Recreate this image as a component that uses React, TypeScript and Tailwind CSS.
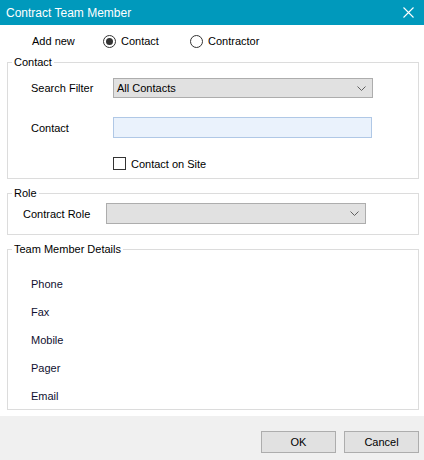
import React from "react";

const Chevron = () => (
  <svg width="9" height="5" viewBox="0 0 9 5" className="shrink-0">
    <path d="M0.5 0.5 L4.5 4.5 L8.5 0.5" fill="none" stroke="#606060" strokeWidth="1" />
  </svg>
);

const Radio = ({ checked, label }: { checked?: boolean; label: string }) => (
  <label className="flex items-center">
    <span className="w-[13px] h-[13px] rounded-full border border-[#333333] bg-white flex items-center justify-center">
      {checked && <span className="w-[7px] h-[7px] rounded-full bg-[#333333]" />}
    </span>
    <span className="ml-[5px]">{label}</span>
  </label>
);

const Select = ({ value, width, height }: { value?: string; width: string; height: string }) => (
  <div
    className={`${width} ${height} bg-[#e1e1e1] border border-[#adadad] flex items-center justify-between pl-[3px] pr-[6px]`}
  >
    <span>{value}</span>
    <Chevron />
  </div>
);

export default function App() {
  return (
    <div
      className="w-[424px] h-[460px] bg-white flex flex-col text-[11px] leading-[14px] text-black overflow-hidden"
      style={{ fontFamily: '"Liberation Sans", Arial, sans-serif' }}
    >
      {/* Title bar */}
      <div className="h-[25px] bg-[#0099bc] flex items-center justify-between pl-[6px] pr-[10px] text-white shrink-0">
        <span className="text-[12px]">Contract Team Member</span>
        <svg width="11" height="11" viewBox="0 0 11 11">
          <path d="M0.5 0.5 L10.5 10.5 M10.5 0.5 L0.5 10.5" stroke="white" strokeWidth="1.1" />
        </svg>
      </div>

      <div className="flex flex-col pl-[7px] pr-[5px]">
        {/* Add new choice */}
        <div className="h-[20px] mt-[6px] flex items-center pl-[25px]">
          <span className="w-[71px]">Add new</span>
          <div className="w-[87px]">
            <Radio checked label="Contact" />
          </div>
          <Radio label="Contractor" />
        </div>

        {/* Contact group */}
        <fieldset className="mt-[4px] border border-[#dcdcdc] pb-[8px]">
          <legend className="ml-[4px] px-[2px] leading-[14px]">Contact</legend>
          <div className="mt-[9px] flex items-center pl-[23px]">
            <span className="w-[82px]">Search Filter</span>
            <Select value="All Contacts" width="w-[260px]" height="h-[20px]" />
          </div>
          <div className="mt-[19px] flex items-center pl-[23px]">
            <span className="w-[82px]">Contact</span>
            <div className="w-[259px] h-[21px] bg-[#eaf2fc] border border-[#b0c8e6]" />
          </div>
          <div className="mt-[19px] h-[13px] flex items-center pl-[105px]">
            <span className="w-[13px] h-[13px] border border-[#333333] bg-white" />
            <span className="ml-[5px]">Contact on Site</span>
          </div>
        </fieldset>

        {/* Role group */}
        <fieldset className="mt-[7px] border border-[#dcdcdc] pb-[10px]">
          <legend className="ml-[4px] px-[2px] leading-[14px]">Role</legend>
          <div className="mt-[3px] flex items-center pl-[15px]">
            <span className="w-[83px]">Contract Role</span>
            <Select width="w-[260px]" height="h-[21px]" />
          </div>
        </fieldset>

        {/* Team member details group */}
        <fieldset className="mt-[7px] h-[168px] border border-[#dcdcdc]">
          <legend className="ml-[4px] px-[2px] leading-[14px]">Team Member Details</legend>
          <div className="mt-[14px] flex flex-col pl-[23px] text-[#101030]">
            {["Phone", "Fax", "Mobile", "Pager", "Email"].map((f) => (
              <div key={f} className="h-[28px] flex items-center">
                {f}
              </div>
            ))}
          </div>
        </fieldset>
      </div>

      {/* Button bar */}
      <div className="mt-auto h-[44px] bg-[#f0f0f0] flex justify-end items-start gap-[8px] pt-[15px] pr-[5px] shrink-0">
        <button className="w-[75px] h-[22px] bg-[#e1e1e1] border border-[#adadad] text-[11px]">OK</button>
        <button className="w-[75px] h-[22px] bg-[#e1e1e1] border border-[#adadad] text-[11px]">Cancel</button>
      </div>
    </div>
  );
}
